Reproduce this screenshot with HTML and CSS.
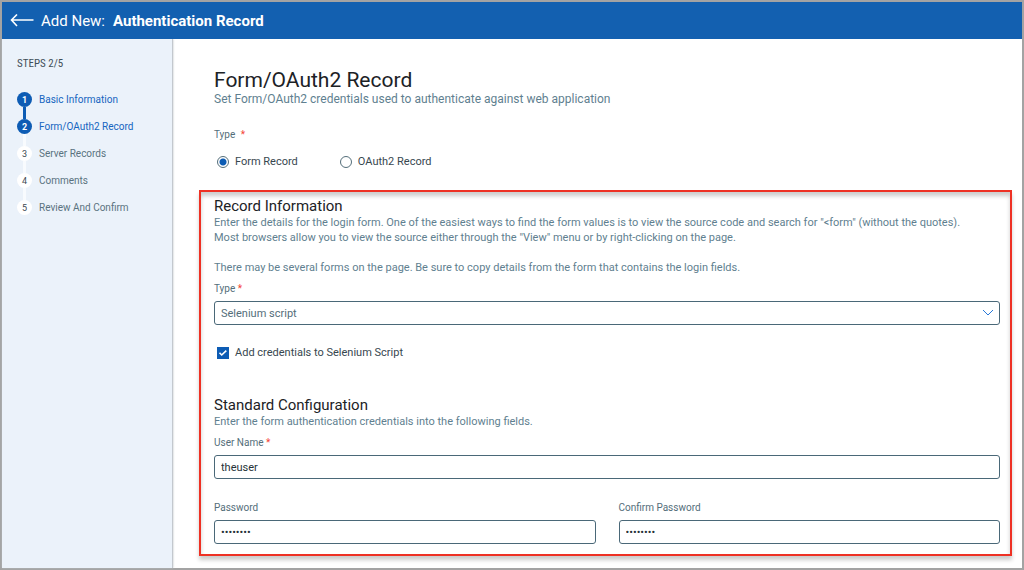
FILE: index.html
```
<!DOCTYPE html>
<html lang="en">
<head>
<meta charset="utf-8">
<title>Add New: Authentication Record</title>
<link rel="stylesheet" href="styles.css">
</head>
<body>
<div class="app">
  <header class="topbar">
    <button class="back" type="button" aria-label="Back">
      <svg width="24" height="14" viewBox="0 0 24 14" fill="none" stroke="currentColor" stroke-width="1.6"><path d="M23.5 6H1.5M7 0.5L1.5 6l5.5 6"/></svg>
    </button>
    <div class="title"><span>Add New:</span><strong>Authentication Record</strong></div>
  </header>
  <div class="body">
    <nav class="sidebar">
      <div class="steps-title">STEPS 2/5</div>
      <ol class="steps">
        <li class="step done"><span class="num">1</span><a href="#">Basic Information</a></li>
        <li class="step current"><span class="num">2</span><a href="#">Form/OAuth2 Record</a></li>
        <li class="step"><span class="num">3</span><a href="#">Server Records</a></li>
        <li class="step"><span class="num">4</span><a href="#">Comments</a></li>
        <li class="step"><span class="num">5</span><a href="#">Review And Confirm</a></li>
      </ol>
    </nav>
    <main class="main">
      <form>
        <section class="intro">
          <h1>Form/OAuth2 Record</h1>
          <p class="hint lead">Set Form/OAuth2 credentials used to authenticate against web application</p>
          <fieldset class="choice">
            <legend class="label wide">Type <span class="req">*</span></legend>
            <div class="radios">
              <label class="option"><input type="radio" name="record" checked>Form Record</label>
              <label class="option"><input type="radio" name="record">OAuth2 Record</label>
            </div>
          </fieldset>
        </section>
        <section class="details">
          <h2>Record Information</h2>
          <p class="hint">Enter the details for the login form. One of the easiest ways to find the form values is to view the source code and search for "&lt;form" (without the quotes).<br>Most browsers allow you to view the source either through the "View" menu or by right-clicking on the page.</p>
          <p class="hint spaced">There may be several forms on the page. Be sure to copy details from the form that contains the login fields.</p>
          <div class="field">
            <label class="label" for="type">Type <span class="req">*</span></label>
            <div class="select-wrap">
              <select class="control" id="type"><option>Selenium script</option></select>
              <svg class="chevron" width="12" height="7" viewBox="0 0 12 7" fill="none" stroke="currentColor"><path d="M1 1l5 5 5-5"/></svg>
            </div>
          </div>
          <label class="option check"><input type="checkbox" checked>Add credentials to Selenium Script</label>
          <h2 class="second">Standard Configuration</h2>
          <p class="hint">Enter the form authentication credentials into the following fields.</p>
          <div class="field">
            <label class="label" for="user">User Name <span class="req">*</span></label>
            <input class="control" id="user" type="text" value="theuser">
          </div>
          <div class="pair">
            <div class="field">
              <label class="label" for="pass">Password</label>
              <input class="control" id="pass" type="password" value="password">
            </div>
            <div class="field">
              <label class="label" for="pass2">Confirm Password</label>
              <input class="control" id="pass2" type="password" value="password">
            </div>
          </div>
        </section>
      </form>
    </main>
  </div>
</div>
</body>
</html>
```
FILE: styles.css
```
* { box-sizing: border-box; }
body { margin: 0; font-family: Roboto, sans-serif; font-size: 11px; color: #3d5059; }
h1, h2, p, ol, fieldset { margin: 0; padding: 0; border: 0; }
h1, h2 { font-weight: 400; color: #1c2226; }
h1 { font-size: 21px; line-height: 24px; }
h2 { font-size: 15px; line-height: 18px; }
.app { min-height: 100vh; border: 2px solid #a3a3a3; display: flex; flex-direction: column; background: #fff; }
.topbar { position: relative; z-index: 1; height: 37px; display: flex; align-items: center; gap: 7px; padding: 0 8px; background: #1360b0; color: #fff; }
.back { display: flex; padding: 0; border: 0; background: none; color: inherit; }
.title { display: flex; gap: 8px; font-size: 15px; line-height: 18px; }
.title strong { font-weight: 700; }
.body { flex: 1; display: flex; }
.sidebar { width: 171px; flex: none; padding: 17px 15px; background: #ebf2fa; border-right: 1px solid #c3c8ce; box-shadow: 0 0 2px #b8bdc2; }
.steps-title { font-family: "Liberation Sans Narrow", "Roboto Condensed", Roboto, sans-serif; font-size: 11px; line-height: 16px; color: #3f4f58; }
.steps { list-style: none; margin-top: 20px; display: grid; gap: 12px; }
.step { position: relative; display: flex; align-items: center; gap: 7px; height: 15px; font-size: 10px; }
.step a { color: #5a7280; text-decoration: none; }
.step.done a, .step.current a { color: #1565c0; }
.num { width: 15px; height: 15px; border-radius: 50%; display: flex; align-items: center; justify-content: center; flex: none; background: #fff; color: #3d4a52; font-size: 9px; }
.done .num, .current .num { background: #0d5cb4; color: #fff; font-weight: 700; }
.step:not(:last-child)::after { content: ""; position: absolute; left: 6px; top: 15px; width: 3px; height: 12px; background: #f8fbfe; }
.step.done::after { background: #0d5cb4; }
.main { flex: 1; min-width: 0; padding: 29px 10px 12px 26px; }
.intro { padding: 0 12px 0 15px; }
.hint { font-size: 11px; line-height: 15px; color: #5f7f90; }
.hint.lead { font-size: 12px; }
.hint.spaced { margin-top: 15px; }
.choice { margin-top: 22px; }
.label { display: block; padding: 0; font-size: 10px; line-height: 12px; color: #546e7a; }
.req { color: #f44336; }
.wide .req { margin-left: 3px; }
.radios { display: flex; gap: 42px; margin-top: 13px; padding-left: 3px; }
.option { display: flex; align-items: center; gap: 6px; line-height: 16px; color: #37474f; }
.option input { appearance: none; margin: 0; width: 12px; height: 12px; border: 1px solid #546e7a; background: #fff; }
.option input[type="radio"] { border-radius: 50%; }
.option input[type="radio"]:checked { background: radial-gradient(circle, #0d5cb4 3px, #fff 4px); }
.check { margin: 20px 0 0 3px; }
.option input[type="checkbox"]:checked { border-color: #0d5cb4; background: #0d5cb4 url("data:image/svg+xml,%3Csvg xmlns='http://www.w3.org/2000/svg' viewBox='0 0 10 10'%3E%3Cpath d='M1.5 4.8l2.2 2.2L8.3 2.6' fill='none' stroke='white' stroke-width='1.6'/%3E%3C/svg%3E") center / 10px no-repeat; }
.details { margin-top: 20px; padding: 5px 10px 10px 13px; border: 2px solid #ee3124; box-shadow: 0 4px 4px rgba(0,0,0,.2), inset 0 4px 4px rgba(0,0,0,.2); }
.field { display: grid; gap: 6px; margin-top: 8px; min-width: 0; }
.control { width: 100%; height: 24px; padding: 0 6px; border: 1px solid #4a6878; border-radius: 3px; background: #fff; color: #263238; font-family: inherit; font-size: 11px; }
.select-wrap { position: relative; }
select.control { display: block; appearance: none; color: #546e7a; }
.chevron { position: absolute; right: 6px; top: 8px; color: #2878d8; pointer-events: none; }
.second { margin-top: 35px; }
.pair { display: grid; grid-template-columns: 1fr 1fr; gap: 23px; margin-top: 23px; }
.pair .field { margin-top: 0; }
```
